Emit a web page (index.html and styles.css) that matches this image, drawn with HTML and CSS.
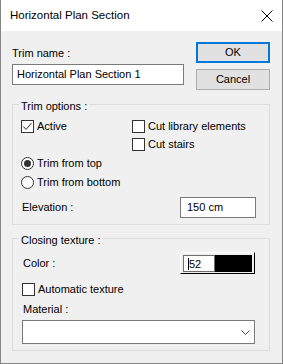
FILE: index.html
```html
<!DOCTYPE html>
<html lang="en">
<head>
    <meta charset="UTF-8">
    <title>Horizontal Plan Section</title>
    <link rel="stylesheet" href="styles.css">
</head>
<body>
<div class="window">
    <div class="titlebar">
        <span class="title">Horizontal Plan Section</span>
        <svg class="close" width="12" height="12" viewBox="0 0 12 12">
            <path d="M0.5 0.5 L11.5 11.5 M11.5 0.5 L0.5 11.5" stroke="#000" stroke-width="1" fill="none"/>
        </svg>
    </div>
    <div class="content">
        <div class="top-row">
            <div class="name-col">
                <div class="label">Trim name :</div>
                <div class="textbox name-box">Horizontal Plan Section 1</div>
            </div>
            <div class="buttons">
                <div class="btn btn-default">OK</div>
                <div class="btn">Cancel</div>
            </div>
        </div>

        <fieldset class="group trim-group">
            <legend>Trim options :</legend>
            <div class="check-grid">
                <div class="check-row">
                    <span class="checkbox">
                        <svg width="11" height="11" viewBox="0 0 11 11"><polyline points="1.5,5.5 4,8.5 9.5,2" stroke="#333" stroke-width="1" fill="none"/></svg>
                    </span>Active
                </div>
                <div class="check-row"><span class="checkbox"></span>Cut library elements</div>
                <div></div>
                <div class="check-row"><span class="checkbox"></span>Cut stairs</div>
            </div>
            <div class="radios">
                <div class="check-row"><span class="radio checked"></span>Trim from top</div>
                <div class="check-row"><span class="radio"></span>Trim from bottom</div>
            </div>
            <div class="field-row elevation-row">
                <span class="label">Elevation :</span>
                <div class="textbox elevation-box">150 cm</div>
            </div>
        </fieldset>

        <fieldset class="group texture-group">
            <legend>Closing texture :</legend>
            <div class="field-row color-row">
                <span class="label">Color :</span>
                <div class="swatch">
                    <div class="swatch-num"><span class="caret">52</span></div>
                    <div class="swatch-color"></div>
                </div>
            </div>
            <div class="check-row auto-row"><span class="checkbox"></span>Automatic texture</div>
            <div class="label material-label">Material :</div>
            <div class="combo">
                <svg width="9" height="5" viewBox="0 0 9 5"><polyline points="0.5,0.5 4.5,4.5 8.5,0.5" stroke="#444" stroke-width="1" fill="none"/></svg>
            </div>
        </fieldset>
    </div>
</div>
</body>
</html>
```

FILE: styles.css
```css
body {
    margin: 0;
    padding: 0;
    font-family: "Liberation Sans", Arial, sans-serif;
    font-size: 11px;
    line-height: 13px;
    color: #000;
    background-color: #f0f0f0;
}

.window {
    width: 283px;
    height: 364px;
    box-sizing: border-box;
    border: 1px solid #858585;
    border-top: none;
    background-color: #f0f0f0;
}

.titlebar {
    height: 31px;
    background-color: #fff;
    display: flex;
    align-items: center;
    justify-content: space-between;
    padding-left: 9px;
}

.title {
    font-size: 11.5px;
}

.close {
    margin-right: 9px;
}

.content {
    padding: 11px 12px 0 11px;
}

.top-row {
    display: flex;
    justify-content: space-between;
    align-items: flex-start;
}

.name-col {
    padding-top: 5px;
}

.textbox {
    box-sizing: border-box;
    height: 21px;
    border: 1px solid #7a7a7a;
    background-color: #fff;
    display: flex;
    align-items: center;
    white-space: nowrap;
}

.name-box {
    width: 172px;
    margin-top: 4px;
    padding-left: 4px;
}

.buttons {
    display: flex;
    flex-direction: column;
    gap: 6px;
    width: 74px;
}

.btn {
    box-sizing: border-box;
    height: 21px;
    border: 1px solid #adadad;
    background-color: #e1e1e1;
    display: flex;
    align-items: center;
    justify-content: center;
}

.btn-default {
    border: 2px solid #0078d7;
}

.group {
    margin: 6px 0 0 0;
    border: 1px solid #dcdcdc;
    min-width: 0;
}

.group legend {
    padding: 4px 2px 0 2px;
    line-height: 13px;
}

.trim-group {
    padding: 7px 13px 6px 8px;
}

.trim-group legend {
    margin-left: -2px;
}

.texture-group {
    margin-top: 5px;
    padding: 5px 14px 6px 9px;
}

.texture-group legend {
    margin-left: -3px;
}

.check-grid {
    display: grid;
    grid-template-columns: 111px 1fr;
    row-gap: 5px;
}

.check-row {
    display: flex;
    align-items: center;
    height: 13px;
    white-space: nowrap;
}

.checkbox {
    box-sizing: border-box;
    width: 13px;
    height: 13px;
    border: 1px solid #333;
    background-color: #fff;
    margin-right: 3px;
    flex-shrink: 0;
    display: flex;
}

.radio {
    box-sizing: border-box;
    width: 13px;
    height: 13px;
    border: 1px solid #333;
    border-radius: 50%;
    background-color: #fff;
    margin-right: 3px;
    flex-shrink: 0;
    display: flex;
    align-items: center;
    justify-content: center;
}

.radio.checked::after {
    content: "";
    width: 7px;
    height: 7px;
    border-radius: 50%;
    background-color: #333;
}

.radios {
    display: flex;
    flex-direction: column;
    gap: 6px;
    margin-top: 6px;
}

.field-row {
    display: flex;
    justify-content: space-between;
    align-items: center;
}

.field-row .label {
    margin-left: 1px;
}

.elevation-row {
    margin-top: 8px;
}

.elevation-box {
    width: 76px;
    padding-left: 6px;
}

.color-row {
    height: 22px;
}

.swatch {
    box-sizing: border-box;
    width: 75px;
    height: 22px;
    border-top: 1px solid #fff;
    border-left: 1px solid #fff;
    border-right: 1px solid #000;
    border-bottom: 1px solid #000;
    padding: 2px 2px 1px 2px;
    display: flex;
}

.swatch-num {
    box-sizing: border-box;
    width: 32px;
    border: 1px solid #6d6d6d;
    background-color: #fff;
    padding-left: 4px;
    display: flex;
    align-items: center;
}

.caret {
    border-left: 1px solid #000;
    line-height: 12px;
}

.swatch-color {
    flex: 1;
    background-color: #000;
}

.auto-row {
    margin-top: 9px;
}

.material-label {
    margin-top: 7px;
    margin-left: 1px;
}

.combo {
    box-sizing: border-box;
    height: 24px;
    margin-top: 4px;
    border: 1px solid #7a7a7a;
    background-color: #fff;
    display: flex;
    align-items: center;
    justify-content: flex-end;
    padding-right: 4px;
}
```
